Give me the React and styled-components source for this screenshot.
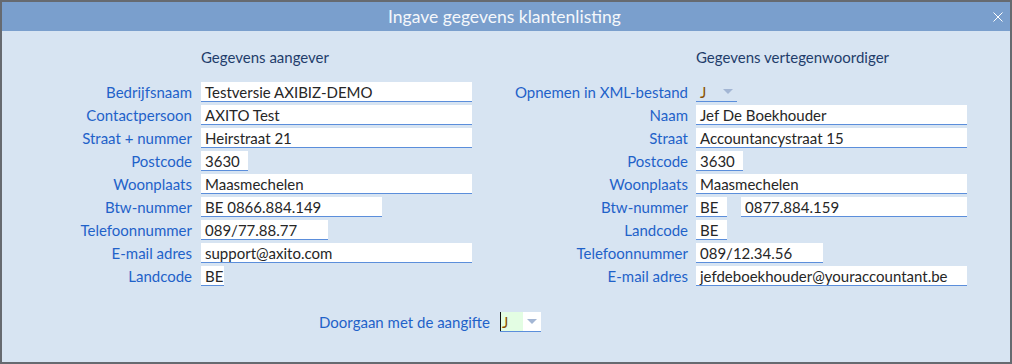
import React from 'react';
import styled, { createGlobalStyle } from 'styled-components';

const GlobalStyle = createGlobalStyle`
    html, body {
        margin: 0;
        padding: 0;
        background: #ffffff;
    }
    body {
        font-family: Lato, "Noto Sans", sans-serif;
    }
`;

const Window = styled.div`
    width: 1012px;
    height: 364px;
    box-sizing: border-box;
    border: 2px solid #666a70;
    background-color: #d7e4f2;
    display: flex;
    flex-direction: column;
`;

const TitleBar = styled.div`
    height: 29px;
    background-color: #7a9fcd;
    display: grid;
    grid-template-columns: 1fr auto 1fr;
    align-items: center;
    padding-right: 7px;
`;

const Title = styled.div`
    grid-column: 2;
    color: #f4f7fb;
    font-size: 17.5px;
    line-height: 29px;
    padding-left: 4px;
`;

const Close = styled.button`
    grid-column: 3;
    justify-self: end;
    width: 10px;
    height: 10px;
    padding: 0;
    border: none;
    background: none;
    display: flex;
    margin-top: 1px;
`;

const Content = styled.div`
    padding-top: 16px;
    display: flex;
    flex-direction: column;
`;

const Columns = styled.div`
    display: flex;
`;

const Section = styled.div`
    display: grid;
    grid-template-columns: ${p => p.labelWidth}px 271px;
    column-gap: ${p => p.gap}px;
    row-gap: 3px;
    align-content: start;
`;

const Heading = styled.div`
    grid-column: 2;
    color: #1f3d6b;
    font-size: 15px;
    line-height: 20px;
    margin-bottom: 12px;
`;

const Label = styled.div`
    color: #1f62c9;
    font-size: 15px;
    line-height: 20px;
    text-align: right;
    white-space: nowrap;
`;

const FieldCell = styled.div`
    display: flex;
    gap: 14px;
`;

const Field = styled.div`
    width: ${p => p.w}px;
    height: 20px;
    box-sizing: border-box;
    background: #ffffff;
    border-bottom: 1px solid #5b8edb;
    padding-left: 4px;
    color: #262626;
    font-size: 15px;
    line-height: 20px;
    white-space: nowrap;
    overflow: hidden;
`;

const Combo = styled.div`
    width: 41px;
    height: 20px;
    box-sizing: border-box;
    border-bottom: 1px solid #5b8edb;
    display: flex;
    align-items: stretch;
    background: ${p => (p.filled ? '#ffffff' : 'transparent')};
`;

const ComboValue = styled.div`
    flex: 1;
    color: #8a5200;
    font-size: 15px;
    line-height: 20px;
    padding-left: ${p => (p.editing ? '1px' : '4px')};
    background: ${p => (p.editing ? '#e3fde3' : 'transparent')};
    border-left: ${p => (p.editing ? '1px solid #111' : 'none')};
    max-width: ${p => (p.editing ? '23px' : 'none')};
    box-sizing: border-box;
`;

const ComboArrow = styled.div`
    width: 18px;
    display: flex;
    align-items: center;
    justify-content: center;
    margin-left: auto;
`;

const Footer = styled.div`
    margin-top: 26px;
    display: grid;
    grid-template-columns: 488px 41px;
    column-gap: 10px;
    align-items: center;
`;

const Arrow = () => (
    <svg width="10" height="5" viewBox="0 0 10 5">
        <polygon points="0,0 10,0 5,5" fill="#a3b6d4" />
    </svg>
);

const Dropdown = ({ value, editing }) => (
    <Combo filled={editing}>
        <ComboValue editing={editing}>{value}</ComboValue>
        <ComboArrow>
            <Arrow />
        </ComboArrow>
    </Combo>
);

const aangever = [
    ['Bedrijfsnaam', [['Testversie AXIBIZ-DEMO', 271]]],
    ['Contactpersoon', [['AXITO Test', 271]]],
    ['Straat + nummer', [['Heirstraat 21', 271]]],
    ['Postcode', [['3630', 47]]],
    ['Woonplaats', [['Maasmechelen', 271]]],
    ['Btw-nummer', [['BE 0866.884.149', 181]]],
    ['Telefoonnummer', [['089/77.88.77', 127]]],
    ['E-mail adres', [['support@axito.com', 271]]],
    ['Landcode', [['BE', 23]]]
];

const vertegenwoordiger = [
    ['Naam', [['Jef De Boekhouder', 271]]],
    ['Straat', [['Accountancystraat 15', 271]]],
    ['Postcode', [['3630', 47]]],
    ['Woonplaats', [['Maasmechelen', 271]]],
    ['Btw-nummer', [['BE', 31], ['0877.884.159', 226]]],
    ['Landcode', [['BE', 31]]],
    ['Telefoonnummer', [['089/12.34.56', 127]]],
    ['E-mail adres', [['jefdeboekhouder@youraccountant.be', 271]]]
];

const renderRows = rows =>
    rows.map(([label, fields]) => (
        <React.Fragment key={label}>
            <Label>{label}</Label>
            <FieldCell>
                {fields.map(([value, w]) => (
                    <Field key={value + w} w={w}>
                        {value}
                    </Field>
                ))}
            </FieldCell>
        </React.Fragment>
    ));

export default function App() {
    return (
        <>
            <GlobalStyle />
            <Window>
                <TitleBar>
                    <Title>Ingave gegevens klantenlisting</Title>
                    <Close aria-label="Sluiten">
                        <svg width="10" height="10" viewBox="0 0 10 10">
                            <path d="M0.5 0.5 L9.5 9.5 M9.5 0.5 L0.5 9.5" stroke="#ffffff" strokeWidth="1" />
                        </svg>
                    </Close>
                </TitleBar>
                <Content>
                    <Columns>
                        <Section labelWidth={190} gap={9}>
                            <Heading>Gegevens aangever</Heading>
                            {renderRows(aangever)}
                        </Section>
                        <Section labelWidth={216} gap={8}>
                            <Heading>Gegevens vertegenwoordiger</Heading>
                            <Label>Opnemen in XML-bestand</Label>
                            <FieldCell>
                                <Dropdown value="J" />
                            </FieldCell>
                            {renderRows(vertegenwoordiger)}
                        </Section>
                    </Columns>
                    <Footer>
                        <Label>Doorgaan met de aangifte</Label>
                        <Dropdown value="J" editing />
                    </Footer>
                </Content>
            </Window>
        </>
    );
}
